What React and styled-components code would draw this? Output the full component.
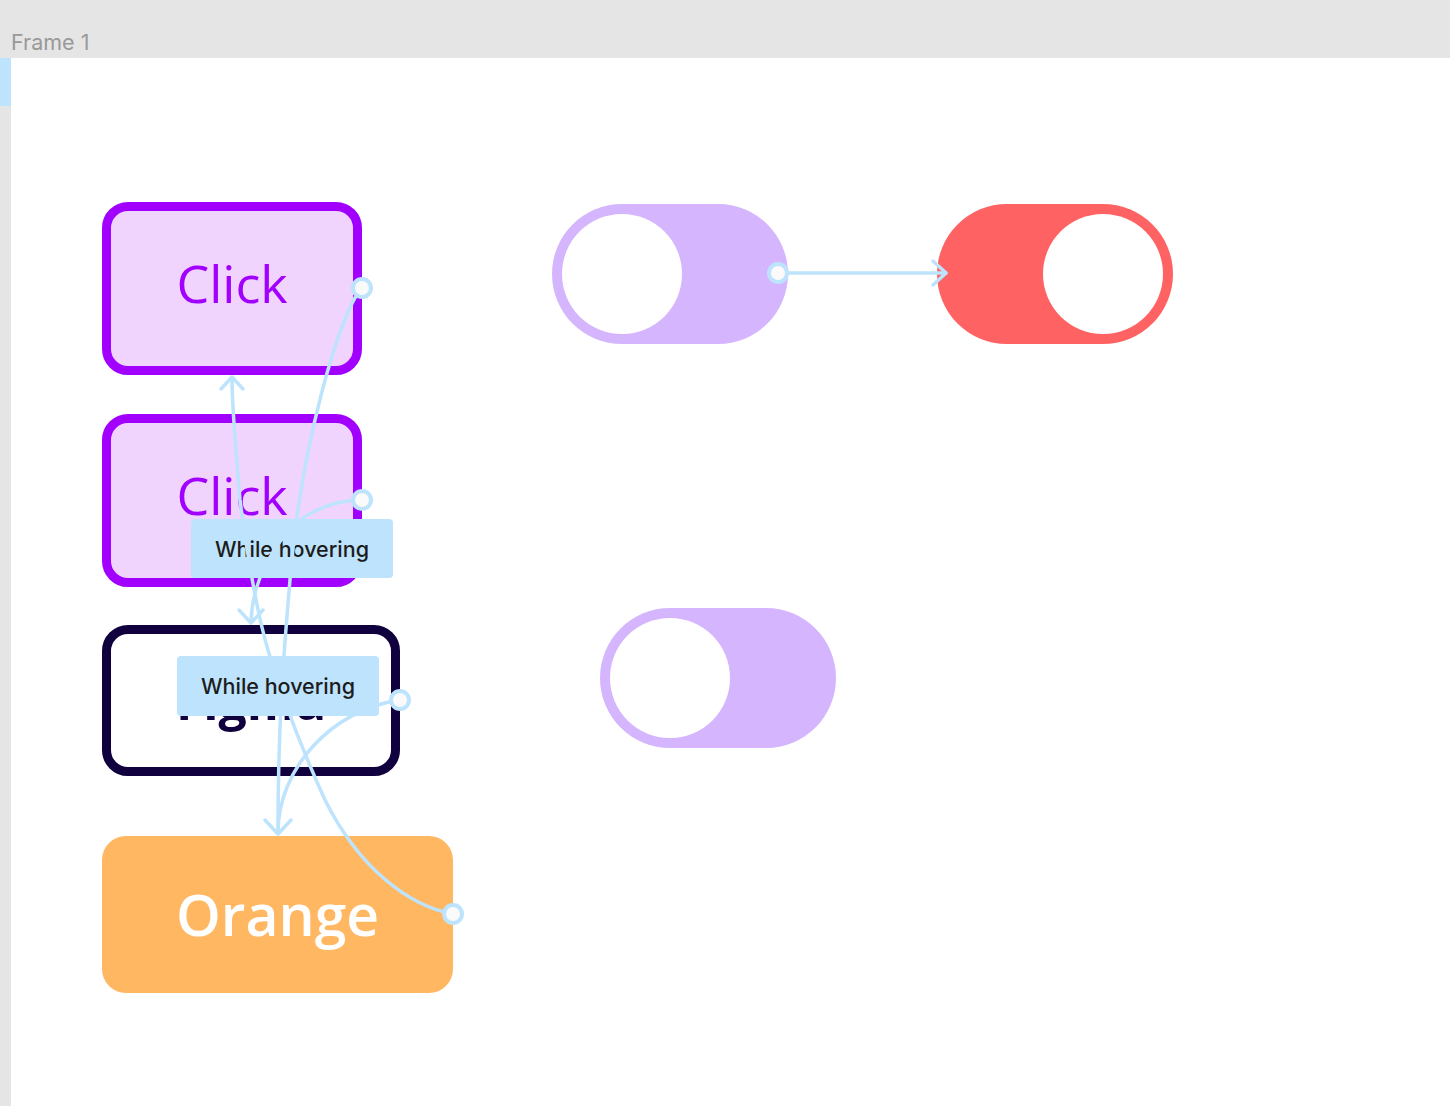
import React from "react"
import styled, { createGlobalStyle } from "styled-components"

const Global = createGlobalStyle`
    html, body {
        margin: 0;
        padding: 0;
        background: #ffffff;
    }
    #root {
        min-height: 100vh;
    }
`

const LINE = "#bde3fd"

let Page = styled.div`
    display: flex;
    flex-direction: column;
    width: 1450px;
    height: 1106px;
    overflow: hidden;
    font-family: Inter, "Noto Sans", sans-serif;
`
let TopBar = styled.div`
    height: 58px;
    flex: none;
    background: #e5e5e5;
    display: flex;
    align-items: flex-end;
    padding: 0 0 4px 11px;
    box-sizing: border-box;
`
let FrameName = styled.span`
    font-size: 21.5px;
    color: #999999;
    line-height: 24px;
`
let Body = styled.div`
    flex: 1;
    display: flex;
`
let Rail = styled.div`
    width: 11px;
    flex: none;
    background: #e5e5e5;
    display: flex;
    flex-direction: column;
`
let RailMarker = styled.div`
    height: 48px;
    background: ${LINE};
`
let Canvas = styled.div`
    flex: 1;
    position: relative;
    background: #ffffff;
`
let Node = styled.div`
    position: absolute;
    left: ${p => p.$x}px;
    top: ${p => p.$y}px;
    width: ${p => p.$w}px;
    height: ${p => p.$h}px;
    box-sizing: border-box;
    padding-bottom: ${p => p.$lift || 0}px;
    display: flex;
    align-items: center;
    justify-content: center;
    background: ${p => p.$bg};
    border: ${p => (p.$border ? `9px solid ${p.$border}` : "none")};
    border-radius: ${p => p.$radius || 26}px;
    color: ${p => p.$color};
    font-family: "Open Sans", "Noto Sans", sans-serif;
    font-size: ${p => p.$size || 52}px;
    font-weight: ${p => p.$weight || 400};
    line-height: 1;
`
let Toggle = styled.div`
    position: absolute;
    left: ${p => p.$x}px;
    top: ${p => p.$y}px;
    width: 236px;
    height: 140px;
    box-sizing: border-box;
    padding: 10px;
    border-radius: 70px;
    background: ${p => p.$bg};
    display: flex;
    justify-content: ${p => (p.$on ? "flex-end" : "flex-start")};
`
let Knob = styled.div`
    width: 120px;
    height: 120px;
    border-radius: 50%;
    background: #ffffff;
`
let Wires = styled.svg`
    position: absolute;
    left: 0;
    top: 0;
    z-index: 2;
    pointer-events: none;
`
let Tag = styled.div`
    position: absolute;
    left: ${p => p.$x}px;
    top: ${p => p.$y}px;
    z-index: ${p => p.$z};
    width: 202px;
    height: ${p => p.$h}px;
    box-sizing: border-box;
    border-radius: 4px;
    background: ${LINE};
    display: flex;
    align-items: center;
    justify-content: center;
    font-family: Inter, "Noto Sans", sans-serif;
    font-size: 21.5px;
    font-weight: 500;
    color: #1c1c1c;
`

// wires use page coordinates (canvas starts at 11,58)
const wires = [
    "M362 288 C340 310 300 450 290 580 C284 650 278 720 278 832",
    "M362 500 C330 500 300 515 285 535 C265 560 252 590 251 622",
    "M400 700 C330 710 278 770 278 832",
    "M453 914 C410 906 360 870 325 800 C300 745 280 690 268 650 C256 610 245 540 240 500 C236 450 232 410 232 378",
    "M778 273 L946 273",
]
const arrows = [
    "M221 389 L232 377 L243 389",
    "M239 610 L251 623 L263 610",
    "M265 820 L278 834 L291 820",
    "M933 261 L946 273 L933 285",
]
const dots = [
    [362, 288],
    [362, 500],
    [400, 700],
    [453, 914],
    [778, 273],
]

function App() {
    return (
        <Page>
            <Global />
            <TopBar>
                <FrameName>Frame 1</FrameName>
            </TopBar>
            <Body>
                <Rail>
                    <RailMarker />
                </Rail>
                <Canvas>
                    <Node $x={91} $y={144} $w={260} $h={173} $lift={12} $bg="#f1d4fe" $border="#a100ff" $color="#a100ff">
                        Click
                    </Node>
                    <Node $x={91} $y={356} $w={260} $h={173} $lift={12} $bg="#f1d4fe" $border="#a100ff" $color="#a100ff">
                        Click
                    </Node>
                    <Node $x={91} $y={567} $w={298} $h={151} $bg="#ffffff" $border="#10003d" $color="#10003d" $weight={700} $size={50}>
                        Figma
                    </Node>
                    <Node $x={91} $y={778} $w={351} $h={157} $bg="#ffb762" $color="#ffffff" $radius={24} $weight={600} $size={57}>
                        Orange
                    </Node>

                    <Toggle $x={541} $y={146} $bg="#d5b6fe">
                        <Knob />
                    </Toggle>
                    <Toggle $x={926} $y={146} $bg="#ff6262" $on>
                        <Knob />
                    </Toggle>
                    <Toggle $x={589} $y={550} $bg="#d5b6fe">
                        <Knob />
                    </Toggle>

                    <Tag $x={180} $y={461} $h={59} $z={1}>While hovering</Tag>

                    <Wires width="1439" height="1048" viewBox="11 58 1439 1048">
                        <g fill="none" stroke={LINE} strokeWidth="3.5" strokeLinecap="round" strokeLinejoin="round">
                            {wires.map((d, i) => (
                                <path key={i} d={d} />
                            ))}
                            {arrows.map((d, i) => (
                                <path key={"a" + i} d={d} />
                            ))}
                        </g>
                        {dots.map(([cx, cy], i) => (
                            <circle key={i} cx={cx} cy={cy} r="9" fill="#fafafa" stroke={LINE} strokeWidth="4" />
                        ))}
                    </Wires>

                    <Tag $x={166} $y={598} $h={60} $z={3}>While hovering</Tag>
                </Canvas>
            </Body>
        </Page>
    )
}

export default App
